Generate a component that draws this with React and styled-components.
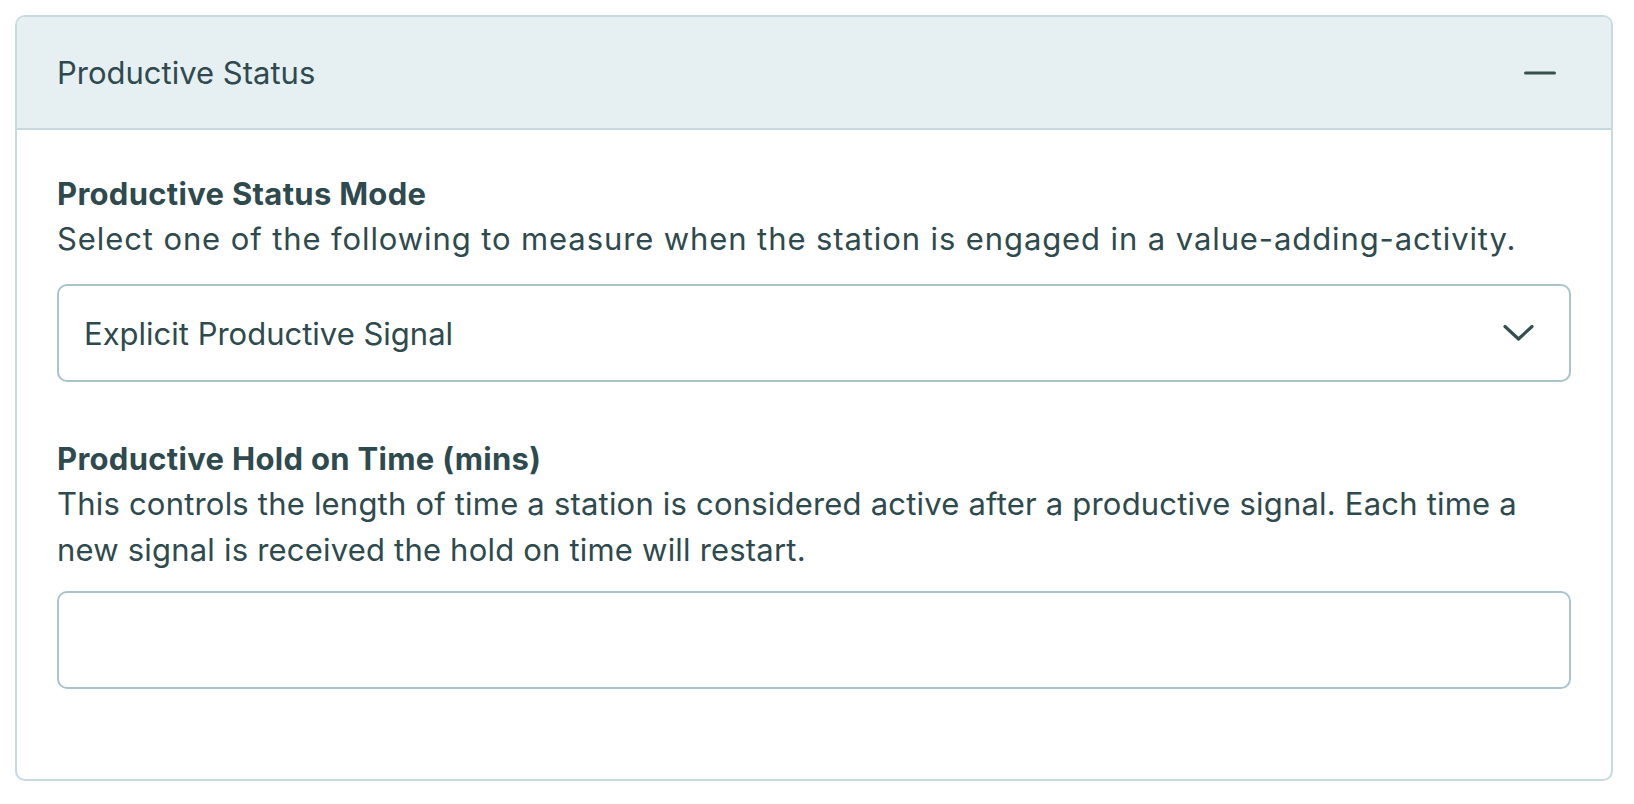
import React from 'react';
import styled, { createGlobalStyle } from 'styled-components';

const GlobalStyle = createGlobalStyle`
  html, body {
    margin: 0;
    padding: 0;
    background: #ffffff;
  }
  body {
    font-family: Inter, "Noto Sans", "Liberation Sans", sans-serif;
    color: #2e4a4e;
  }
`;

const Page = styled.div`
  padding: 15px 21px 24px 15px;
`;

const Card = styled.section`
  border: 2px solid #c6dadf;
  border-radius: 10px;
  overflow: hidden;
  background: #ffffff;
`;

const Header = styled.div`
  height: 111px;
  display: flex;
  align-items: center;
  justify-content: space-between;
  padding: 0 55px 0 40px;
  background: #e6eff1;
  border-bottom: 2px solid #c6dadf;
`;

const Title = styled.h2`
  margin: 0;
  font-size: 31px;
  font-weight: 400;
  color: #2e4a4e;
`;

const Toggle = styled.button`
  border: 0;
  background: none;
  padding: 0;
  width: 32px;
  height: 20px;
  display: flex;
  align-items: center;
  cursor: pointer;
`;

const Body = styled.div`
  padding: 44px 40px 90px 40px;
  display: flex;
  flex-direction: column;
  gap: 57px;
`;

const Field = styled.div`
  display: flex;
  flex-direction: column;
`;

const Label = styled.label`
  font-size: 31px;
  font-weight: 700;
  line-height: 40px;
  letter-spacing: 0.3px;
  color: #2e4a4e;
`;

const Help = styled.p`
  margin: 2px 0 0;
  font-size: 31px;
  line-height: 46px;
  font-weight: 400;
  color: #2e4a4e;
  letter-spacing: ${p => p.$spacing || 0}px;
`;

const Box = styled.div`
  margin-top: ${p => p.$gap || 22}px;
  height: 94px;
  border: 2px solid #a9c5cb;
  border-radius: 10px;
  display: flex;
  align-items: center;
  justify-content: space-between;
  padding: 0 35px 0 25px;
  font-size: 31px;
  color: #2e4a4e;
  background: #ffffff;
`;

const Chevron = () => (
  <svg width="31" height="18" viewBox="0 0 31 18" fill="none">
    <path d="M2 2.5 L15.5 15 L29 2.5" stroke="#33504f" strokeWidth="3.2" strokeLinecap="round" strokeLinejoin="round" />
  </svg>
);

const Minus = () => (
  <svg width="32" height="4" viewBox="0 0 32 4" fill="none">
    <path d="M1.5 2 H30.5" stroke="#35514f" strokeWidth="3" strokeLinecap="round" />
  </svg>
);

export default function App() {
  return (
    <Page>
      <GlobalStyle />
      <Card>
        <Header>
          <Title>Productive Status</Title>
          <Toggle aria-label="Collapse"><Minus /></Toggle>
        </Header>
        <Body>
          <Field>
            <Label>Productive Status Mode</Label>
            <Help $spacing={0.9}>Select one of the following to measure when the station is engaged in a value-adding-activity.</Help>
            <Box>
              <span>Explicit Productive Signal</span>
              <Chevron />
            </Box>
          </Field>
          <Field>
            <Label>Productive Hold on Time (mins)</Label>
            <Help $spacing={0.2}>This controls the length of time a station is considered active after a productive signal. Each time a new signal is received the hold on time will restart.</Help>
            <Box $gap={18} />
          </Field>
        </Body>
      </Card>
    </Page>
  );
}
